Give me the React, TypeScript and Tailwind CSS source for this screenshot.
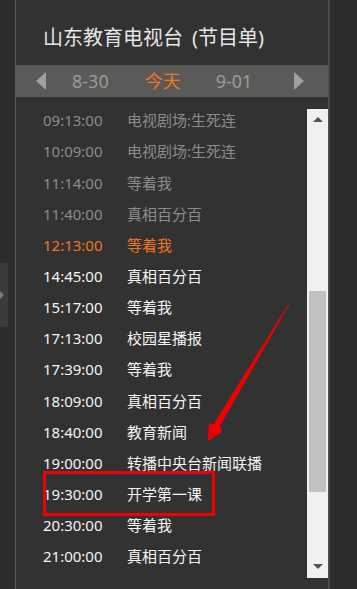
import React from "react";

type Row = { t: string; n: string; s: "past" | "now" | "next" };

const rows: Row[] = [
  { t: "09:13:00", n: "电视剧场:生死连", s: "past" },
  { t: "10:09:00", n: "电视剧场:生死连", s: "past" },
  { t: "11:14:00", n: "等着我", s: "past" },
  { t: "11:40:00", n: "真相百分百", s: "past" },
  { t: "12:13:00", n: "等着我", s: "now" },
  { t: "14:45:00", n: "真相百分百", s: "next" },
  { t: "15:17:00", n: "等着我", s: "next" },
  { t: "17:13:00", n: "校园星播报", s: "next" },
  { t: "17:39:00", n: "等着我", s: "next" },
  { t: "18:09:00", n: "真相百分百", s: "next" },
  { t: "18:40:00", n: "教育新闻", s: "next" },
  { t: "19:00:00", n: "转播中央台新闻联播", s: "next" },
  { t: "19:30:00", n: "开学第一课", s: "next" },
  { t: "20:30:00", n: "等着我", s: "next" },
  { t: "21:00:00", n: "真相百分百", s: "next" },
];

const colorFor = (s: Row["s"]) =>
  s === "past" ? "text-[#8c8c8c]" : s === "now" ? "text-[#f07524]" : "text-[#f4f4f4]";

export default function App() {
  return (
    <div
      className="relative w-[357px] h-[589px] overflow-hidden bg-[#2d2d2d] flex"
      style={{ fontFamily: '"Noto Sans", "Noto Sans CJK SC", sans-serif' }}
    >
      {/* left side tab */}
      <div className="w-[15px] flex flex-col">
        <div className="h-[263px]" />
        <div className="w-[8px] h-[64px] bg-[#3b3b3b] flex items-center">
          <div className="w-0 h-0 border-y-[4px] border-y-transparent border-l-[4px] border-l-[#7a7a7a]" />
        </div>
      </div>
      {/* main panel */}
      <div className="w-[315px] h-full bg-[#323232] border-l border-l-[#5a5a5a] border-r-2 border-r-[#4a4a4a] flex flex-col">
        <div className="h-[65px] flex items-center pl-[27px] pt-[11px] text-[20px] text-[#e6e6e6]">
          山东教育电视台<span className="ml-[9px]">(节目单)</span>
        </div>
        <div className="h-[32px] bg-[#5a5a59] flex items-center text-[18px]">
          <div className="ml-[20px] w-0 h-0 border-y-[9px] border-y-transparent border-r-[10px] border-r-[#a0a0a0]" />
          <span className="ml-[26px] text-[#9a9a9a]">8-30</span>
          <span className="ml-[36px] text-[#f07524]">今天</span>
          <span className="ml-[35px] text-[#9a9a9a]">9-01</span>
          <div className="ml-[42px] w-0 h-0 border-y-[9px] border-y-transparent border-l-[10px] border-l-[#a0a0a0]" />
        </div>
        <div className="flex flex-1 pt-[12px]">
          <div className="flex-1 flex flex-col -mt-[4px]">
            {rows.map((r, i) => (
              <div
                key={i}
                className={`h-[31.15px] shrink-0 flex items-center text-[15px] ${colorFor(r.s)}`}
              >
                <span className="ml-[27px] w-[84px]">{r.t}</span>
                <span>{r.n}</span>
              </div>
            ))}
          </div>
          <div className="w-[21px] h-[469px] bg-[#f0f0f0] flex flex-col items-center">
            <div className="h-[20px] flex items-center justify-center">
              <div className="w-0 h-0 border-x-[5px] border-x-transparent border-b-[5px] border-b-[#505050]" />
            </div>
            <div className="h-[162px]" />
            <div className="w-[17px] h-[201px] bg-[#c1c1c1]" />
            <div className="flex-1" />
            <div className="h-[24px] flex items-center justify-center">
              <div className="w-0 h-0 border-x-[5px] border-x-transparent border-t-[5px] border-t-[#505050]" />
            </div>
          </div>
        </div>
      </div>
      {/* annotations */}
      <div className="absolute left-[43px] top-[471px] w-[172px] h-[45px] border-[3px] border-[#f00000]" />
      <svg className="absolute left-0 top-0" width="357" height="589" viewBox="0 0 357 589">
        <polygon
          points="290,303 220,426 222,432 208,441 209,423 213,425 289,303"
          fill="#f00000"
        />
      </svg>
    </div>
  );
}
